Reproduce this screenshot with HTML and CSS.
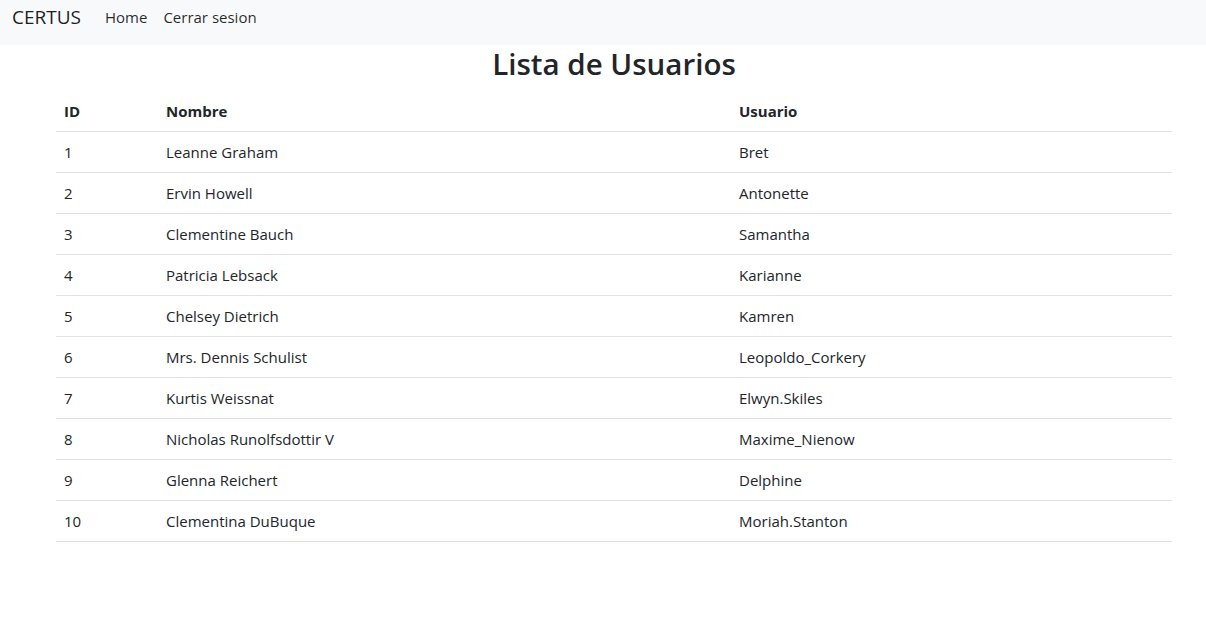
FILE: index.html
```html
<!DOCTYPE html>
<html lang="es">
<head>
<meta charset="utf-8">
<title>CERTUS</title>
<link rel="stylesheet" href="styles.css">
</head>
<body>
<nav class="navbar">
  <a class="brand" href="#">CERTUS</a>
  <a class="nav-link" href="#">Home</a>
  <a class="nav-link" href="#">Cerrar sesion</a>
</nav>
<main class="content">
  <h1 class="title">Lista de Usuarios</h1>
  <table class="table">
    <thead>
      <tr><th class="c-id">ID</th><th class="c-name">Nombre</th><th>Usuario</th></tr>
    </thead>
    <tbody>
      <tr><td>1</td><td>Leanne Graham</td><td>Bret</td></tr>
      <tr><td>2</td><td>Ervin Howell</td><td>Antonette</td></tr>
      <tr><td>3</td><td>Clementine Bauch</td><td>Samantha</td></tr>
      <tr><td>4</td><td>Patricia Lebsack</td><td>Karianne</td></tr>
      <tr><td>5</td><td>Chelsey Dietrich</td><td>Kamren</td></tr>
      <tr><td>6</td><td>Mrs. Dennis Schulist</td><td>Leopoldo_Corkery</td></tr>
      <tr><td>7</td><td>Kurtis Weissnat</td><td>Elwyn.Skiles</td></tr>
      <tr><td>8</td><td>Nicholas Runolfsdottir V</td><td>Maxime_Nienow</td></tr>
      <tr><td>9</td><td>Glenna Reichert</td><td>Delphine</td></tr>
      <tr><td>10</td><td>Clementina DuBuque</td><td>Moriah.Stanton</td></tr>
    </tbody>
  </table>
</main>
</body>
</html>
```
FILE: styles.css
```css
* { box-sizing: border-box; }
html, body { margin: 0; padding: 0; }
body {
  font-family: "Segoe UI", "Open Sans", "Noto Sans", sans-serif;
  font-size: 15px;
  line-height: 24px;
  color: #212529;
  background: #fff;
}
a { text-decoration: none; color: inherit; }
.navbar {
  display: flex;
  align-items: center;
  height: 45px;
  padding: 0 12px 11px;
  background: #f8f9fa;
}
.brand {
  font-size: 19px;
  line-height: 30px;
  margin-right: 16px;
  color: rgba(0,0,0,0.9);
}
.nav-link {
  font-size: 15px;
  line-height: 30px;
  padding: 0 8px;
  color: rgba(0,0,0,0.85);
}
.content {
  padding: 0 34px 0 56px;
}
.title {
  margin: 0 0 8px;
  font-size: 29.5px;
  font-weight: 600;
  line-height: 38px;
  text-align: center;
}
.table {
  width: 100%;
  border-collapse: collapse;
}
.table th, .table td {
  padding: 8px;
  text-align: left;
  border-bottom: 1px solid #dee2e6;
  vertical-align: top;
}
.table th { font-weight: 700; }
.c-id { width: 102px; }
.c-name { width: 573px; }
```
